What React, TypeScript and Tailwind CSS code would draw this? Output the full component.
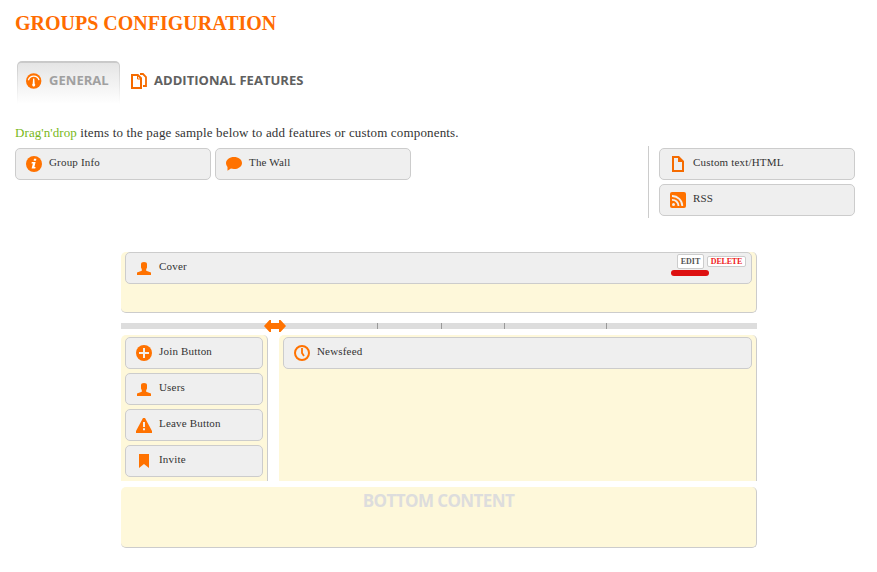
import type { ReactNode } from "react";

type IconName = "info" | "chat" | "doc" | "rss" | "user" | "plus" | "warning" | "bookmark" | "clock" | "gauge" | "docs";

const drawings: Record<IconName, ReactNode> = {
  info: (
    <>
      <circle cx="8" cy="8" r="8" fill="#ff7200" />
      <path d="M8 2.8h2.4l-.4 2H7.6zM5.8 6h3.8l-1.2 5h1.2l-.3 1.6H5.6L6.9 7.4H5.5z" fill="#fff" />
    </>
  ),
  chat: <path d="M8 1c4.4 0 8 2.5 8 5.9S12.4 13 8 13c-1.1 0-2.2-.2-3.1-.5L1.5 14.7v-3.8C.6 9.8 0 8.4 0 7 0 3.7 3.6 1 8 1z" fill="#ff7200" />,
  doc: <path fillRule="evenodd" d="M2 0h7l5 5v11H2zM4 2v12h8V6H8V2z" fill="#f56b00" />,
  rss: (
    <>
      <rect width="16" height="16" rx="2" fill="#ff7200" />
      <g fill="none" stroke="#f3efeb" strokeWidth="1.8">
        <path d="M2 4a10 10 0 0 1 10.3 10M2 7.8a6.2 6.2 0 0 1 6.5 6.2" />
      </g>
      <circle cx="3.5" cy="12.5" r="1.5" fill="#f3efeb" />
    </>
  ),
  user: <path d="M5 4.2C5 2.8 6 2 8 2s3 .8 3 2.2v3.3l-.8 1.7v1.6l4.8 1.7V15H1v-2.5l4.8-1.7V9.2L5 7.5z" fill="#ff7200" />,
  plus: (
    <>
      <circle cx="8" cy="8" r="8" fill="#ff7200" />
      <path d="M7 3h2v4h4v2H9v4H7V9H3V7h4z" fill="#f3efeb" />
    </>
  ),
  warning: (
    <>
      <path d="M7 1h2l7 13v2H0v-2z" fill="#ff7200" />
      <path d="M7 5h2v5H7zM7 11.3h2v2H7z" fill="#f3efeb" />
    </>
  ),
  bookmark: <path d="M3 1h10v14l-5-4-5 4z" fill="#ff7200" />,
  clock: (
    <g fill="none" stroke="#ff7200" strokeWidth="2">
      <circle cx="8" cy="8" r="7" />
      <path d="M8 3v5l2 3" strokeWidth="1.8" />
    </g>
  ),
  gauge: (
    <>
      <circle cx="7.7" cy="8" r="7.7" fill="#ff7200" />
      <path d="M2.4 7.2c.7-2.5 2.7-4.1 5.3-4.1s4.7 1.6 5.3 4.1" fill="none" stroke="#fff" strokeWidth="1.3" />
      <path d="M7.1 5.5h1.2l.4 5.3a1.5 1.5 0 1 1-2 0z" fill="#fff" />
    </>
  ),
  docs: (
    <g fill="none" stroke="#f56b00" strokeWidth="2">
      <path d="M1 2h5.8L10 5.2V15H1z" />
      <path d="M6.5 2v4H10" strokeWidth="1" />
      <path d="M9 1h3l3 3v9h-3" strokeWidth="1.8" />
    </g>
  ),
};

function Icon({ name }: { name: IconName }) {
  return (
    <svg width="16" height="16" viewBox="0 0 16 16" className="shrink-0">
      {drawings[name]}
    </svg>
  );
}

function Card({ icon, label, children }: { icon: IconName; label: string; children?: ReactNode }) {
  return (
    <div className="flex h-8 w-full items-start rounded-[5px] border border-[#ccc] bg-[#efefef] pt-[7px] pl-2.5">
      <Icon name={icon} />
      <span className="ml-[7px] text-[11px] leading-[13px] tracking-[0.18px] whitespace-nowrap text-[#333]">{label}</span>
      {children}
    </div>
  );
}

function ResizeBar() {
  return (
    <div className="relative mt-2.5 h-1.5 bg-[#ddd]">
      <i className="absolute left-64 h-full w-px bg-[#999]" />
      <i className="absolute left-80 h-full w-px bg-[#999]" />
      <i className="absolute left-[383px] h-full w-px bg-[#999]" />
      <i className="absolute left-[485px] h-full w-px bg-[#999]" />
      <svg className="absolute -top-[3px] left-[143px]" width="22" height="12" viewBox="0 0 22 12">
        <path d="M0 6 5.5 0H7v3h8V0h1.5L22 6l-5.5 6H15V9H7v3H5.5z" fill="#ff7200" />
      </svg>
    </div>
  );
}

export default function App() {
  return (
    <main className="h-[572px] w-[877px] overflow-hidden bg-white pt-[11px] pl-[15px] font-['Liberation_Serif',serif]">
      <h1 className="h-[50px] text-[20px] leading-6 font-bold text-[#ff6c00]">GROUPS CONFIGURATION</h1>

      <nav className="ml-0.5 flex h-[43px] font-['Open_Sans',sans-serif] text-[13px] leading-4 font-bold tracking-[0.04px]">
        <div className="h-[43px] w-[103px] rounded-t-[5px] bg-linear-to-b from-[#c8c8c8] to-white px-px pt-0.5">
          <div className="flex h-[41px] rounded-t-[3px] bg-linear-to-b from-[#e5e5e5] to-white pt-[9px] pl-2 text-[#a0a0a0]">
            <span className="pt-px"><Icon name="gauge" /></span>
            <span className="ml-[7px]">GENERAL</span>
          </div>
        </div>
        <div className="ml-[11px] flex pt-[11px] text-[#606060]">
          <span className="pt-px"><Icon name="docs" /></span>
          <span className="ml-[7px] whitespace-nowrap">ADDITIONAL FEATURES</span>
        </div>
      </nav>

      <p className="mt-5 h-[22px] text-[13px] leading-[18px] tracking-[0.16px] whitespace-nowrap text-[#333]">
        <span className="tracking-[0.08px] text-[#78b819]">Drag'n'drop</span> items to the page sample below to add features or custom components.
      </p>
      <section className="flex w-[840px]">
        <div className="mt-0.5 flex w-[396px] gap-1">
          <Card icon="info" label="Group Info" />
          <Card icon="chat" label="The Wall" />
        </div>
        <div className="ml-auto flex h-[72px] w-[207px] flex-col gap-1 border-l border-[#ccc] pt-0.5 pl-2.5">
          <Card icon="doc" label="Custom text/HTML" />
          <Card icon="rss" label="RSS" />
        </div>
      </section>

      <section className="mt-[34px] ml-[106px] w-[636px]">
        <div className="h-[61px] rounded-[5px] border-r border-b border-[#ccc] bg-[#fef8da] pr-1 pl-1">
          <Card icon="user" label="Cover">
            <div className="relative -mt-1.5 mr-[5px] ml-auto flex items-start gap-[3px] text-[8px] leading-[9px] font-bold">
              <span className="flex h-[15px] w-[27px] items-center justify-center rounded-xs border border-[#ccc] bg-white text-[#555]">EDIT</span>
              <span className="mt-0.5 flex h-[11px] w-[39px] items-center justify-center rounded-xs border border-[#ccc] bg-white tracking-[-0.2px] text-[#e22]">DELETE</span>
              <i className="absolute top-4 -left-1.5 h-1.5 w-[38px] rounded-full bg-[#dd1010]" />
            </div>
          </Card>
        </div>
        <ResizeBar />
        <div className="mt-1.5 flex h-[146px] gap-[11px]">
          <div className="flex w-[147px] flex-col gap-1 rounded-t-[5px] border-r border-[#ccc] bg-[#fef8da] pt-0.5 pr-1 pl-1">
            <Card icon="plus" label="Join Button" />
            <Card icon="user" label="Users" />
            <Card icon="warning" label="Leave Button" />
            <Card icon="bookmark" label="Invite" />
          </div>
          <div className="w-[478px] rounded-t-[5px] border-r border-[#ccc] bg-[#fef8da] pt-0.5 pr-1 pl-1">
            <Card icon="clock" label="Newsfeed" />
          </div>
        </div>
        <div className="mt-1.5 h-[61px] rounded-[5px] border-r border-b border-[#ccc] bg-[#fef8da] pt-1 text-center font-['Open_Sans',sans-serif] text-[17px] leading-5 font-bold tracking-[-0.6px] text-[#ddd]">
          BOTTOM CONTENT
        </div>
      </section>
    </main>
  );
}
